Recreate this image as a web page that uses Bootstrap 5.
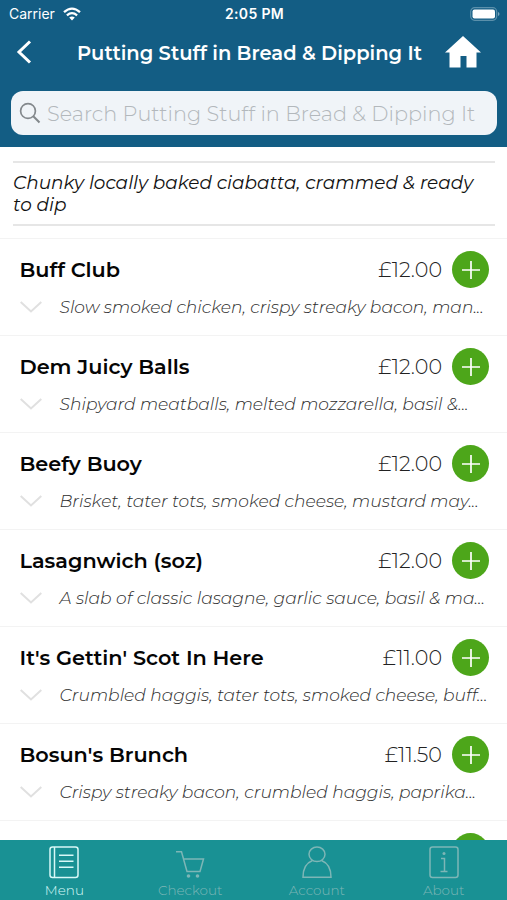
<!DOCTYPE html>
<html lang="en">
<head>
<meta charset="utf-8">
<meta name="viewport" content="width=device-width, initial-scale=1">
<title>Putting Stuff in Bread &amp; Dipping It</title>
<link href="https://cdn.jsdelivr.net/npm/bootstrap@5.3.0/dist/css/bootstrap.min.css" rel="stylesheet">
<style>
body { font-family: Montserrat, Inter, sans-serif; color: #111; background: #fff; }
svg { display: block; flex: none; }
.screen { height: 900px; }
.app-header { background: #135d84; height: 147px; }
.status { height: 28px; padding: 0 7px 0 9px; font-family: Inter, sans-serif; font-size: 14px; line-height: 28px; }
.status .clock { font-weight: 600; letter-spacing: .35px; }
.side { width: 90px; }
.title-bar { height: 48px; padding: 0 26px 0 16px; }
.title-bar h1 { font-size: 19.5px; font-weight: 600; padding-top: 4px; margin-left: auto; margin-right: 23px; }
.search { height: 44px; margin: 15px 10px 0 11px; padding-left: 8px; border-radius: 12px; background: #f0f4f8; }
.search input, .search input:focus { background: transparent; color: #b3b8bc; font-size: 20.8px; font-weight: 300; margin-left: 6px; padding: 2px 0 0; }
.search input::placeholder { color: #b3b8bc; opacity: 1; }
.intro { margin: 14px 12px 12px 13px; height: 65px; padding-top: 9px; border-top: 2px solid #e6e6e6; border-bottom: 2px solid #e6e6e6; font-size: 18.45px; line-height: 22px; font-style: italic; }
.dish { height: 97px; padding: 12px 18px 0 19.5px; border-top: 1px solid #f3f3f3; }
.dish h2 { font-size: 20.8px; font-weight: 600; color: #050505; padding-top: 2px; }
.price { font-size: 20.7px; font-weight: 300; color: #222; margin-right: 10px; padding-top: 1px; }
.add { width: 37px; height: 37px; background: #4da61a; }
.blurb { font-size: 17.1px; line-height: 24px; font-weight: 300; font-style: italic; color: #2c2c2c; margin-left: 18px; }
.details { margin-top: 7px; }
.tabs { height: 60px; background: #199194; font-size: 13.5px; font-weight: 300; color: #7db6b6; }
.tabs a { color: inherit; padding-top: 5px; line-height: 19px; }
.tabs a.current { color: #d8f8f7; padding-left: 2px; }
</style>
<script src="https://cdn.jsdelivr.net/npm/bootstrap@5.3.0/dist/js/bootstrap.bundle.min.js"></script>
</head>
<body>
<svg width="0" height="0" class="d-none">
  <symbol id="plus" viewBox="0 0 18 18"><path d="M9 0v18M0 9h18" stroke="#fff" stroke-width="1.7"/></symbol>
  <symbol id="chev" viewBox="0 0 22 12"><path d="M.7 1 11 10.5 21.300 1" fill="none" stroke="#e0e0e0" stroke-width="2"/></symbol>
</svg>
<div class="screen d-flex flex-column overflow-hidden">
  <header class="app-header flex-shrink-0 text-white">
    <div class="status d-flex justify-content-between">
      <div class="side d-flex align-items-center"><span>Carrier</span>
        <svg class="ms-2" width="18" height="14" viewBox="0 0 18 14" fill="none" stroke="#fff" stroke-width="2.300"><path d="M1 5.200Q9-2 17 5.200M3.900 8.300q5.100-4.300 10.200 0"/><path d="m6.200 10.600 2.800 2.900 2.800-2.900q-2.800-2-5.600 0Z" fill="#fff" stroke="none"/></svg>
      </div>
      <span class="clock">2:05 PM</span>
      <div class="side d-flex align-items-center justify-content-end">
        <svg width="30" height="14" viewBox="0 0 30 14"><rect x=".7" y=".7" width="26" height="12.600" rx="4" fill="none" stroke="#5b90ab" stroke-width="1.200"/><rect x="2.500" y="2.500" width="22.500" height="9" rx="2" fill="#fff"/><path d="M28 5v4q1.500-.6 1.500-2T28 5Z" fill="#7aa6bd"/></svg>
      </div>
    </div>
    <div class="title-bar d-flex align-items-center justify-content-between">
      <svg width="16" height="24" viewBox="0 0 16 24" fill="none" stroke="#fff" stroke-width="3"><path d="M14 1.500 3 12l11 10.500"/></svg>
      <h1 class="mb-0 text-nowrap">Putting Stuff in Bread &amp; Dipping It</h1>
      <svg width="36" height="32" viewBox="0 0 36 32" fill="#fff"><path d="M18 0 36 16.500h-4.500V31.500H21.500V20h-6v11.500H4.500v-15H0Z"/></svg>
    </div>
    <div class="search d-flex align-items-center">
      <svg width="22" height="22" viewBox="0 0 22 22" fill="none" stroke="#83888c" stroke-width="1.700"><circle cx="9" cy="9" r="7.400"/><path d="m14.300 14.300 6.200 6.200" stroke-width="2"/></svg>
      <input class="form-control border-0 shadow-none" aria-label="Search" placeholder="Search Putting Stuff in Bread &amp; Dipping It">
    </div>
  </header>
  <main class="flex-grow-1 overflow-hidden">
    <div class="intro">Chunky locally baked ciabatta, crammed &amp; ready<br>to dip</div>
    <section class="dish">
      <div class="d-flex align-items-center"><h2 class="m-0 me-auto">Buff Club</h2><span class="price">£12.00</span><div class="add rounded-circle d-flex align-items-center justify-content-center"><svg width="18" height="18"><use href="#plus"/></svg></div></div>
      <div class="details d-flex align-items-center"><svg width="22" height="12"><use href="#chev"/></svg><span class="blurb text-nowrap">Slow smoked chicken, crispy streaky bacon, man...</span></div>
    </section>
    <section class="dish">
      <div class="d-flex align-items-center"><h2 class="m-0 me-auto">Dem Juicy Balls</h2><span class="price">£12.00</span><div class="add rounded-circle d-flex align-items-center justify-content-center"><svg width="18" height="18"><use href="#plus"/></svg></div></div>
      <div class="details d-flex align-items-center"><svg width="22" height="12"><use href="#chev"/></svg><span class="blurb text-nowrap">Shipyard meatballs, melted mozzarella, basil &amp;...</span></div>
    </section>
    <section class="dish">
      <div class="d-flex align-items-center"><h2 class="m-0 me-auto">Beefy Buoy</h2><span class="price">£12.00</span><div class="add rounded-circle d-flex align-items-center justify-content-center"><svg width="18" height="18"><use href="#plus"/></svg></div></div>
      <div class="details d-flex align-items-center"><svg width="22" height="12"><use href="#chev"/></svg><span class="blurb text-nowrap">Brisket, tater tots, smoked cheese, mustard may...</span></div>
    </section>
    <section class="dish">
      <div class="d-flex align-items-center"><h2 class="m-0 me-auto">Lasagnwich (soz)</h2><span class="price">£12.00</span><div class="add rounded-circle d-flex align-items-center justify-content-center"><svg width="18" height="18"><use href="#plus"/></svg></div></div>
      <div class="details d-flex align-items-center"><svg width="22" height="12"><use href="#chev"/></svg><span class="blurb text-nowrap">A slab of classic lasagne, garlic sauce, basil &amp; ma...</span></div>
    </section>
    <section class="dish">
      <div class="d-flex align-items-center"><h2 class="m-0 me-auto">It's Gettin' Scot In Here</h2><span class="price">£11.00</span><div class="add rounded-circle d-flex align-items-center justify-content-center"><svg width="18" height="18"><use href="#plus"/></svg></div></div>
      <div class="details d-flex align-items-center"><svg width="22" height="12"><use href="#chev"/></svg><span class="blurb text-nowrap">Crumbled haggis, tater tots, smoked cheese, buff...</span></div>
    </section>
    <section class="dish">
      <div class="d-flex align-items-center"><h2 class="m-0 me-auto">Bosun's Brunch</h2><span class="price">£11.50</span><div class="add rounded-circle d-flex align-items-center justify-content-center"><svg width="18" height="18"><use href="#plus"/></svg></div></div>
      <div class="details d-flex align-items-center"><svg width="22" height="12"><use href="#chev"/></svg><span class="blurb text-nowrap">Crispy streaky bacon, crumbled haggis, paprika...</span></div>
    </section>
    <section class="dish"><div class="d-flex justify-content-end"><div class="add rounded-circle"></div></div></section>
  </main>
  <nav class="tabs d-flex flex-shrink-0">
    <a class="current w-25 d-flex flex-column align-items-center text-decoration-none" href="#">
      <svg width="30" height="36" viewBox="0 0 30 36" fill="none" stroke="currentColor" stroke-width="1.500"><rect x="1" y="2" width="28" height="30.500" rx="2.500"/><path d="M5.500 2v30.500M10 10.200h14.500M10 16.200h14.500M10 22.200h14.500"/></svg><span>Menu</span></a>
    <a class="w-25 d-flex flex-column align-items-center text-decoration-none" href="#">
      <svg width="30" height="36" viewBox="0 0 30 36" fill="none" stroke="currentColor" stroke-width="1.500"><path d="M1 6.800h5.500L12 26.500h13L28.500 14H8.500"/><circle cx="13.500" cy="31" r="1.800" fill="currentColor" stroke="none"/><circle cx="22.500" cy="31" r="1.800" fill="currentColor" stroke="none"/></svg><span>Checkout</span></a>
    <a class="w-25 d-flex flex-column align-items-center text-decoration-none" href="#">
      <svg width="30" height="36" viewBox="0 0 30 36" fill="none" stroke="currentColor" stroke-width="1.500"><ellipse cx="15" cy="9.300" rx="8" ry="7.300"/><path d="M10.500 15.500C4 18 1 23 1 32.200h28c0-9.200-3-14.200-9.500-16.700"/></svg><span>Account</span></a>
    <a class="w-25 d-flex flex-column align-items-center text-decoration-none" href="#">
      <svg width="30" height="36" viewBox="0 0 30 36" fill="none" stroke="currentColor" stroke-width="1.500"><rect x="1" y="2" width="28" height="30.500" rx="2.500"/><path d="M12 13.500h3.500V26.500M11.500 26.500h7"/><circle cx="15" cy="8.500" r="1.500" fill="currentColor" stroke="none"/></svg><span>About</span></a>
  </nav>
</div>
</body>
</html>
